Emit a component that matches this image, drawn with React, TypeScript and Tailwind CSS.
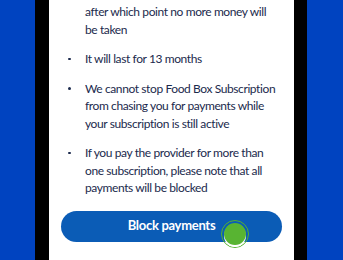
const items: { bullet: boolean; lines: string[] }[] = [
  { bullet: false, lines: ["after which point no more money will", "be taken"] },
  { bullet: true, lines: ["It will last for 13 months"] },
  {
    bullet: true,
    lines: [
      "We cannot stop Food Box Subscription",
      "from chasing you for payments while",
      "your subscription is still active",
    ],
  },
  {
    bullet: true,
    lines: [
      "If you pay the provider for more than",
      "one subscription, please note that all",
      "payments will be blocked",
    ],
  },
];

export default function App() {
  return (
    <div
      className="flex h-[260px] w-[343px] overflow-hidden"
      style={{ fontFamily: "Lato, 'Noto Sans', sans-serif" }}
    >
      <div className="w-[35px] bg-[#0043c0]" />
      <div className="w-[14px] bg-black" />
      <div className="flex w-[245px] flex-col overflow-hidden bg-white">
        <div className="flex flex-col gap-[12px] pt-[3px] text-[12px] leading-[17.5px] tracking-[-0.4px] text-[#1b2a4d]">
          {items.map((item, i) => (
            <div key={i} className="flex">
              <span className="flex h-[17.5px] w-[36px] shrink-0 items-center pl-[19px]">
                {item.bullet && (
                  <span className="h-[2.5px] w-[2.5px] rounded-full bg-[#1b2a4d]" />
                )}
              </span>
              <p className="flex flex-col">
                {item.lines.map((line) => (
                  <span key={line} className="whitespace-nowrap">
                    {line}
                  </span>
                ))}
              </p>
            </div>
          ))}
        </div>
        <div className="relative mx-[12px] mt-[14px] shrink-0">
          <button className="flex h-[31px] w-full items-center justify-center rounded-full bg-[#0b5cb6] text-[13px] font-bold tracking-[-0.3px] text-white">
            Block payments
          </button>
          <span className="absolute left-[160px] top-[9px] flex h-[28px] w-[28px] items-center justify-center rounded-full border-[1.5px] border-[#56b230]">
            <span className="h-[22px] w-[22px] rounded-full bg-[#58b432] shadow-[0_2px_0_#ffffff]" />
          </span>
        </div>
        <p className="mt-[14px] shrink-0 text-center text-[12px] leading-[17.5px] text-[#3b7fd0]">
          I'll make my own choices
        </p>
      </div>
      <div className="w-[13px] bg-black" />
      <div className="flex-1 bg-[#0043c0]" />
    </div>
  );
}
